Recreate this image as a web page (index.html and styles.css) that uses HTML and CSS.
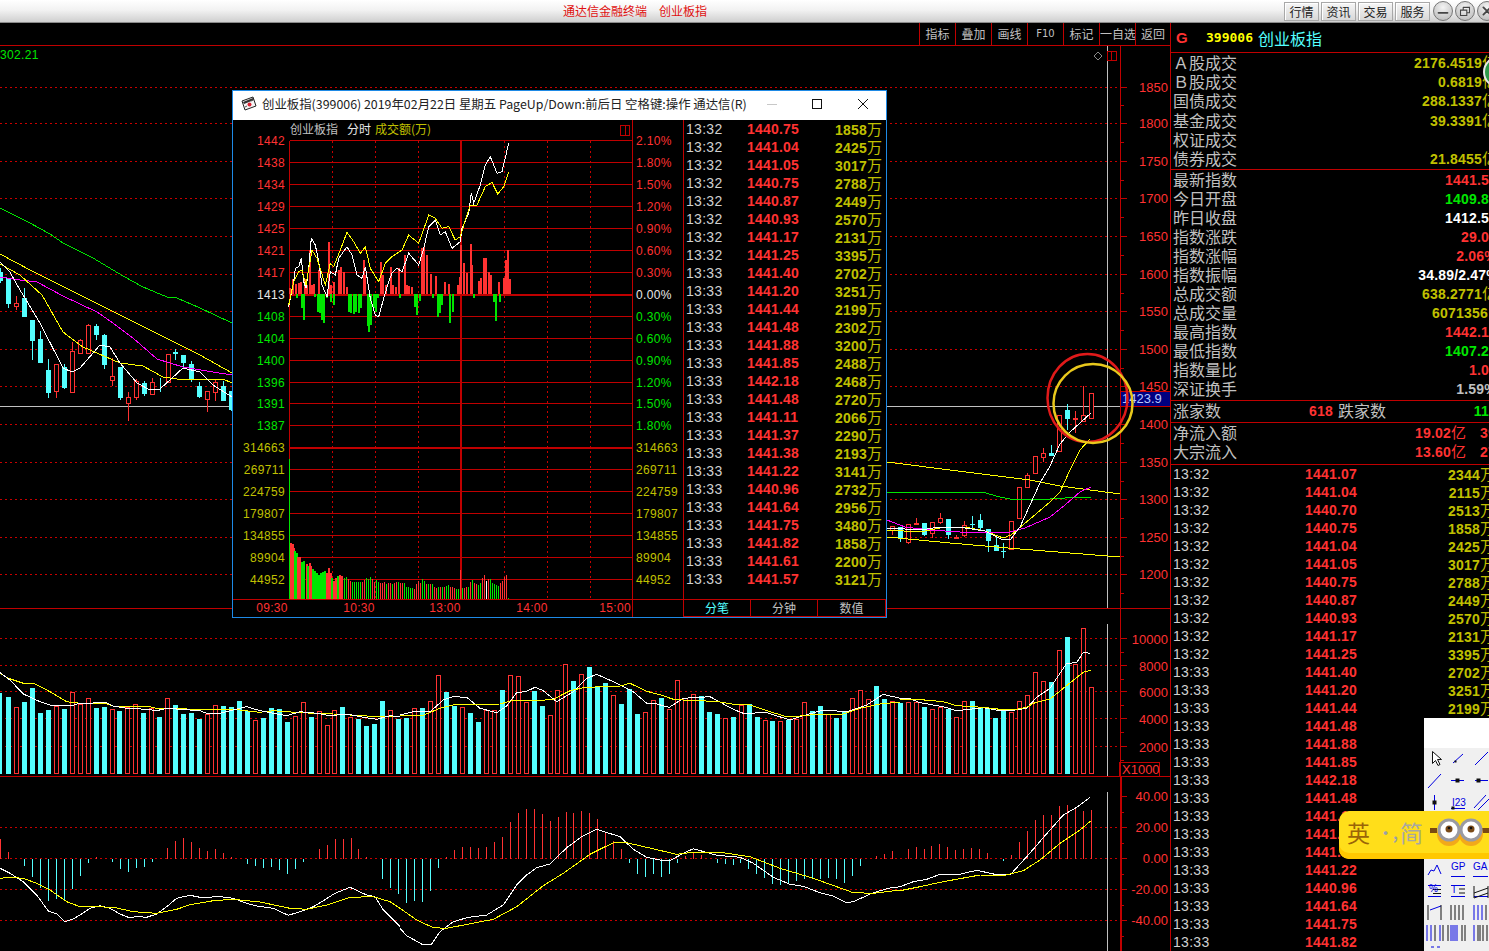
FILE: index.html
```html
<!DOCTYPE html>
<html lang="zh-CN">
<head>
<meta charset="utf-8">
<title>通达信金融终端 创业板指</title>
<link rel="stylesheet" href="styles.css">
</head>
<body>
<div class="app">
  <header class="titlebar">
    <div class="app-title"><span>通达信金融终端</span><span>创业板指</span></div>
    <nav class="menu">
      <button class="menu-btn">行情</button>
      <button class="menu-btn">资讯</button>
      <button class="menu-btn">交易</button>
      <button class="menu-btn">服务</button>
      <span class="round-btn"><svg viewBox="0 0 20 20"><path d="M5 12h10" class="glyph"/></svg></span>
      <span class="round-btn"><svg viewBox="0 0 20 20"><path d="M8 6h7v6h-3M5 9h7v6H5zM8 6v3" class="glyph thin"/></svg></span>
      <span class="round-btn"><svg viewBox="0 0 20 20"><path d="M6 6l8 8M14 6l-8 8" class="glyph"/></svg></span>
    </nav>
  </header>

  <div class="workspace">
    <section class="chart-col">
      <div class="chart-tools">
        <span class="tool">指标</span><span class="tool">叠加</span><span class="tool">画线</span><span class="tool tool-f10">F10</span><span class="tool">标记</span><span class="tool">一自选</span><span class="tool">返回</span>
      </div>
      <svg id="pricePane" class="pane pane-price" viewBox="0 46 1170 562"></svg>
      <svg id="volPane" class="pane pane-vol" viewBox="0 609 1170 167"></svg>
      <svg id="macdPane" class="pane pane-macd" viewBox="0 777 1170 174"></svg>
    </section>

    <aside class="quote">
      <div class="quote-head"><b class="q-g">G</b><b class="q-code">399006</b><span class="q-name">创业板指</span></div>
      <div class="q-sec q-sec-1">
        <div class="q-row"><span>Ａ股成交</span><b class="yl">2176.4519<i>亿</i></b></div>
        <div class="q-row"><span>Ｂ股成交</span><b class="yl">0.6819<i>亿</i></b></div>
        <div class="q-row"><span>国债成交</span><b class="yl">288.1337<i>亿</i></b></div>
        <div class="q-row"><span>基金成交</span><b class="yl">39.3391<i>亿</i></b></div>
        <div class="q-row"><span>权证成交</span></div>
        <div class="q-row"><span>债券成交</span><b class="yl">21.8455<i>亿</i></b></div>
      </div>
      <div class="q-sec q-sec-2">
        <div class="q-row"><span>最新指数</span><b class="rd">1441.57</b></div>
        <div class="q-row"><span>今日开盘</span><b class="gn">1409.87</b></div>
        <div class="q-row"><span>昨日收盘</span><b class="wt">1412.53</b></div>
        <div class="q-row"><span>指数涨跌</span><b class="rd">29.04</b></div>
        <div class="q-row"><span>指数涨幅</span><b class="rd">2.06%</b></div>
        <div class="q-row q-wide"><span>指数振幅</span><b class="wt">34.89/2.47%</b></div>
        <div class="q-row"><span>总成交额</span><b class="yl">638.2771<i>亿</i></b></div>
        <div class="q-row q-inset"><span>总成交量</span><b class="yl">6071356</b></div>
        <div class="q-row"><span>最高指数</span><b class="rd">1442.18</b></div>
        <div class="q-row"><span>最低指数</span><b class="gn">1407.29</b></div>
        <div class="q-row"><span>指数量比</span><b class="rd">1.05</b></div>
        <div class="q-row"><span>深证换手</span><b class="gy">1.59%</b></div>
      </div>
      <div class="q-sec q-sec-3">
        <div class="q-row q-split"><span class="q-l1">涨家数</span><b class="rd q-n1">618</b><span>跌家数</span><b class="gn q-end">113</b></div>
      </div>
      <div class="q-sec q-sec-4">
        <div class="q-row"><span>净流入额</span><b class="rd q-push">19.02<i>亿</i></b><b class="rd q-second">39.1%</b></div>
        <div class="q-row"><span>大宗流入</span><b class="rd q-push">13.60<i>亿</i></b><b class="rd q-second">27.6%</b></div>
      </div>
      <div id="quoteTicks" class="q-ticks"></div>
    </aside>
  </div>

  <section class="popup">
    <div class="popup-title">
      <svg class="popup-icon" viewBox="0 0 16 16"><path d="M1 5l11-4 3 9-11 4z" fill="#f4f4f4" stroke="#222"/><path d="M2 6l10-4 1 2-10 4z" fill="#333"/><circle cx="8.5" cy="8.5" r="2" fill="#d23" /><path d="M4 11l2-1M10 5l2-1" stroke="#555"/></svg>
      <span class="popup-caption">创业板指(399006) 2019年02月22日 星期五 PageUp/Down:前后日 空格键:操作 通达信(R)</span>
      <span class="win-ctl win-min"></span>
      <span class="win-ctl win-max"></span>
      <svg class="win-close" viewBox="0 0 10 10"><path d="M0 0l10 10M10 0L0 10" stroke="#111" fill="none"/></svg>
    </div>
    <div class="popup-body">
      <svg id="miniChart" class="mini-chart" viewBox="233 120 450 497"></svg>
      <div class="mini-side">
        <div id="miniTicks" class="mini-ticks"></div>
        <div class="mini-tabs"><span class="tab tab-on">分笔</span><span class="tab">分钟</span><span class="tab">数值</span></div>
      </div>
    </div>
  </section>

  <span class="bubble"></span>

  <svg class="toolbox" viewBox="1424 718 65 233">
    <rect x="1424" y="718" width="65" height="30" fill="#fff"/>
    <rect x="1424" y="748" width="65" height="203" fill="#f0f0f0"/>
    <g fill="none" stroke="#0000e0">
      <path d="M1432.5 751.5v12l3-3 2.500 5 2-1-2.500-5h4z" fill="#fff" stroke="#111"/>
      <path d="M1453 763l10-9M1475 765l13-13M1428 788l13-14M1451 780.500h13M1475 780.500h13M1434.500 795v15M1451 808.500h14M1474 808l12-13M1478 810l11-11"/>
      <path d="M1428 875l3-5 3 1 3-6 4 9"/>
      <path d="M1451 876.500h14M1473 876.500h15M1428 885.500h13M1428 896.500h13M1451 885.500h14M1451 896.500h14M1474 896.500h14M1430 910l11-4M1474 905v15M1478 905v15M1482 905v15"/>
    </g>
    <g stroke="#111" fill="none">
      <path d="M1433 889.500h8M1433 893.500h8M1459 889h6M1459 893h6M1474 886v12M1474 893l14-5M1474 898l14-5M1488 886v12M1428 905v15M1441 905v15M1451 905v15M1455 905v15M1459 905v15M1463 905v15M1486 905v15"/>
    </g>
    <g stroke="#111" fill="#111"><rect x="1455" y="761" width="1" height="1"/><rect x="1456" y="779" width="3" height="3"/><rect x="1477" y="779" width="3" height="3"/><rect x="1433" y="801" width="3" height="3"/><rect x="1452" y="807" width="2" height="2"/></g>
    <g class="tool-glyphs">
      <text x="1452" y="806">I23</text><text x="1451" y="870">GP</text><text x="1473" y="870">GA</text><text x="1429" y="892">%</text><text x="1451" y="893">T</text>
    </g>
    <g stroke-width="1" fill="none">
      <path d="M1427 925v16M1431 925v16M1440 925v16" stroke="#0000e0"/><path d="M1435 925v16M1443 925v16M1448 925v16" stroke="#111"/>
      <path d="M1451 925v16M1453 925v16M1455 925v16M1457 925v16" stroke="#0000e0"/><path d="M1462 925v16M1465 925v16" stroke="#111"/>
      <path d="M1474 925v16" stroke="#0000e0"/><path d="M1478 925v16M1480 925v16M1483 925v16M1487 925v16" stroke="#111"/>
      <path d="M1431 947h3M1437 947h3" stroke="#0000e0"/>
    </g>
  </svg>

  <div class="ime">
    <span class="ime-en">英</span><span class="ime-dot">·,</span><span class="ime-cn">简</span>
    <svg class="goggles" viewBox="0 0 59 30">
      <rect x="0" y="11" width="7" height="5" fill="#7a4a10"/><rect x="52" y="11" width="7" height="5" fill="#7a4a10"/>
      <ellipse cx="19" cy="17" rx="12" ry="12" fill="#f2a91a"/><ellipse cx="41" cy="17" rx="12" ry="12" fill="#f2a91a"/>
      <circle cx="19" cy="13" r="10" fill="#fff" stroke="#9a9aa2" stroke-width="3"/><circle cx="41" cy="13" r="10" fill="#fff" stroke="#9a9aa2" stroke-width="3"/>
      <circle cx="19" cy="12" r="3.500" fill="#7a4a18"/><circle cx="41" cy="12" r="3.500" fill="#7a4a18"/>
      <circle cx="19" cy="11" r="1.300" fill="#111"/><circle cx="41" cy="11" r="1.300" fill="#111"/>
    </svg>
  </div>
</div>
<script src="script.js"></script>
</body>
</html>
```
FILE: styles.css
```css
* { box-sizing: border-box; }
html, body { margin: 0; padding: 0; background: #000; overflow: hidden; }
.app { position: relative; width: 1489px; height: 951px; overflow: hidden; background: #000; font-family: "Noto Sans CJK SC", "Liberation Sans", sans-serif; }

/* title bar */
.titlebar { display: flex; align-items: center; height: 23px; background: linear-gradient(#ffffff, #f2f2f2 45%, #cfcfcf); border-bottom: 1px solid #8a8a8a; }
.app-title { flex: 1; display: flex; gap: 12px; padding-left: 563px; color: #e01010; font-size: 12px; line-height: 20px; }
.menu { display: flex; align-items: center; margin-right: -8px; gap: 2px; flex: none; }
.menu-btn { width: 35px; height: 19px; padding: 0; border: 1px solid #a8a8a8; background: linear-gradient(#f6f6f6, #d8d8d8); box-shadow: inset 1px 1px 0 #fff; color: #222; font: 12px/17px "Noto Sans CJK SC", sans-serif; }
.round-btn { width: 20px; height: 20px; border-radius: 50%; border: 1px solid #777; background: radial-gradient(circle at 50% 30%, #f4f4f4, #b4b4b4); display: block; }
.menu-btn + .round-btn { margin-left: 1px; }
.round-btn svg { display: block; width: 18px; height: 18px; }
.glyph { fill: none; stroke: #444; stroke-width: 2; stroke-linecap: round; }
.glyph.thin { stroke-width: 1.2; }

/* workspace */
.workspace { display: flex; height: 928px; }
.chart-col { flex: 0 0 1170px; display: flex; flex-direction: column; }
.chart-tools { display: flex; justify-content: flex-end; height: 23px; border-bottom: 1px solid #c00000; }
.tool { width: 36px; border-left: 1px solid #c00000; color: #c0c0c0; font-size: 12px; line-height: 21px; text-align: center; white-space: nowrap; }
.tool:last-child { width: 35px; }
.tool-f10 { font-family: "DejaVu Sans", sans-serif; font-size: 10px; }
.pane { display: block; width: 1170px; flex: none; background: #000; }
.pane-price { height: 563px; border-bottom: 1px solid #c00000; }
.pane-vol { height: 168px; border-bottom: 1px solid #c00000; }
.pane-macd { height: 174px; }

/* SVG chart primitives */
svg line, svg polyline, svg rect.px { shape-rendering: crispEdges; }
.grid { stroke: #c80000; stroke-width: 1; stroke-dasharray: 2 3; }
.axis { stroke: #c00000; stroke-width: 1; }
.axis2 { stroke: #c00000; stroke-width: 2; }
.tick { stroke: #c00000; stroke-width: 1; }
.cross { stroke: #c0c0c0; stroke-width: 1; }
.up { stroke: #ff3232; fill: #000; stroke-width: 1; }
.up-wick { stroke: #ff3232; stroke-width: 1; }
.down { fill: #54ffff; stroke: none; }
.down-wick { stroke: #54ffff; stroke-width: 1; }
.ma { fill: none; stroke-width: 1; }
.ma-w { stroke: #ffffff; }
.ma-y { stroke: #ffff00; }
.ma-m { stroke: #ff00ff; }
.ma-g { stroke: #00e600; }
.lbl { font: 13px "Liberation Sans", sans-serif; fill: #ff3232; }
.lbl-s { font: 12px "Liberation Sans", sans-serif; letter-spacing: .33px; }
.fill-r { fill: #ff3232; }
.fill-g { fill: #00e600; }
.fill-w { fill: #e8e8e8; }
.fill-y { fill: #c0c000; }
.cjk { font: 12px "Noto Sans CJK SC", sans-serif; }
.fill-gy { fill: #c0c0c0; }
.halo-red { fill: none; stroke: #e01a1a; stroke-width: 2.5; }
.halo-yel { fill: none; stroke: #e8c81c; stroke-width: 2.5; }
.price-tag { fill: #000080; stroke: #c00000; }
.tag-text { font: 13px "Liberation Sans", sans-serif; fill: #b8c8ff; }
.lbox { fill: none; stroke: #c00000; }

/* quote panel */
.quote { flex: 0 0 328px; border-left: 1px solid #c00000; color: #c0c0c0; font-size: 16px; }
.quote-head { display: flex; align-items: center; height: 30px; border-bottom: 1px solid #c00000; }
.q-g { width: 35px; padding-left: 5px; color: #ff3232; font: bold 15px "Liberation Sans", sans-serif; }
.q-code { width: 52px; color: #ffff00; font: bold 13px "DejaVu Sans Mono", monospace; }
.q-name { color: #54ffff; font-size: 16px; line-height: 20px; }
.q-sec { border-bottom: 1px solid #c00000; }
.q-sec-1 { height: 117px; }
.q-sec-2 { height: 231px; }
.q-sec-3 { height: 22px; }
.q-sec-4 { height: 42px; }
.q-sec-1 .q-row { height: 19.2px; }
.q-row { display: flex; justify-content: space-between; align-items: center; height: 19px; padding: 0 1px 0 2px; line-height: 19px; white-space: nowrap; }
.q-row b { font: bold 14px/18px "Liberation Sans", sans-serif; letter-spacing: .2px; }
.q-row i { font: 400 15px/18px "Noto Sans CJK SC", sans-serif; font-style: normal; letter-spacing: 0; }
.q-wide { margin-right: -2px; }
.q-inset { padding-right: 10px; }
.yl { color: #c0c000; }
.rd { color: #ff3232; }
.gn { color: #00e600; }
.wt { color: #ffffff; }
.gy { color: #c0c0c0; }
.q-split { justify-content: flex-start; }
.q-l1 { width: 136px; }
.q-n1 { width: 29px; }
.q-end { margin-left: auto; }
.q-push { margin-left: auto; }
.q-second { width: 17px; margin-left: 14px; }
.q-ticks { padding-left: 2px; padding-right: 3px; }
.tick-row { display: grid; grid-template-columns: 132px 1fr auto; height: 18px; line-height: 18px; white-space: nowrap; }
.t-time { color: #d0d0d0; font: 400 14px/18px "Liberation Sans", sans-serif; letter-spacing: .3px; }
.t-price { color: #ff3232; font: bold 14px/18px "Liberation Sans", sans-serif; letter-spacing: .2px; }
.t-vol { color: #c0c000; font: bold 14px/18px "Liberation Sans", sans-serif; letter-spacing: .2px; }
.t-vol i { font: 400 15px/18px "Noto Sans CJK SC", sans-serif; font-style: normal; letter-spacing: 0; }

/* floating quote window */
.popup { position: absolute; left: 232px; top: 90px; width: 655px; height: 528px; display: flex; flex-direction: column; background: #000; border: 1px solid #1e8ae6; }
.popup-title { display: flex; align-items: center; height: 29px; padding-bottom: 3px; flex: none; background: #fff; color: #222; font-size: 12px; }
.popup-icon { width: 16px; height: 16px; margin-left: 8px; flex: none; }
.popup-caption { margin-left: 5px; white-space: nowrap; font-size: 12.4px; }
.win-ctl { display: block; flex: none; }
.win-min { width: 10px; height: 1px; margin-left: 20px; background: #c8c8c8; }
.win-max { width: 10px; height: 10px; margin-left: 35px; border: 1px solid #111; }
.win-close { width: 10px; height: 10px; margin-left: 36px; flex: none; }
.popup-body { display: flex; flex: 1; min-height: 0; }
.mini-chart { display: block; width: 450px; height: 497px; flex: none; }
.mini-side { flex: 1; display: flex; flex-direction: column; border-left: 1px solid #c00000; }
.mini-ticks { flex: 1; padding: 0 4px 0 2px; }
.mini-ticks .tick-row { grid-template-columns: 61px 1fr auto; }
.mini-tabs { display: flex; height: 18px; border: 1px solid #c00000; border-left: 0; }
.tab { flex: 0 0 66px; border-left: 1px solid #c00000; color: #c0c0c0; font-size: 12px; line-height: 16px; text-align: center; }
.tab + .tab { flex-basis: 67px; }
.tab:last-child { flex: 1; }
.tab:first-child { border-left: 0; }
.tab-on { color: #54ffff; }

/* overlays */
.bubble { position: absolute; left: 1483px; top: 56px; width: 32px; height: 32px; border-radius: 50%; background: #2d9a4a; border: 2px solid #e8e8e8; }
.toolbox { position: absolute; left: 1424px; top: 718px; width: 65px; height: 233px; display: block; }
.tool-glyphs text { font: 10px "Liberation Sans", sans-serif; fill: #0000e0; }
.ime { position: absolute; left: 1339px; top: 811px; width: 170px; height: 48px; display: flex; align-items: center; padding: 0 0 6px 8px; border-radius: 10px 0 0 10px; background: #ffde1a; box-shadow: inset 0 -6px 0 #ffc800; }
.ime-en { color: #9a6408; font-size: 23px; line-height: 30px; }
.ime-dot { margin-left: 8px; width: 22px; color: #9aa0a8; font-size: 15px; font-weight: 700; }
.ime-cn { color: #a8a8a0; font-size: 23px; line-height: 30px; }
.goggles { width: 59px; height: 30px; margin-left: 7px; flex: none; }
```
FILE: script.js
```js
(function () {
  var Z = 1 / 3;
  function pts(str, ox, oy) {
    return str.trim().split(/\s+/).map(function (p) {
      var a = p.split(',');
      return (ox + a[0] * Z).toFixed(1) + ',' + (oy + a[1] * Z).toFixed(1);
    }).join(' ');
  }
  function poly(cls, points) { return '<polyline class="ma ' + cls + '" points="' + points + '"/>'; }
  function ln(cls, x1, y1, x2, y2) { return '<line class="' + cls + '" x1="' + x1 + '" y1="' + y1 + '" x2="' + x2 + '" y2="' + y2 + '"/>'; }
  function txt(cls, x, y, s, anchor) { return '<text class="' + cls + '" x="' + x + '" y="' + y + '"' + (anchor ? ' text-anchor="' + anchor + '"' : '') + '>' + s + '</text>'; }

  /* ---------- price pane ---------- */
  var AX = 1120.5, PANE_R = 1168;
  var levels = [[1850,87],[1800,123.5],[1750,161.5],[1700,198.5],[1650,236.5],[1600,274.5],[1550,311.5],[1500,349.5],[1450,386.5],[1400,424.5],[1350,462.5],[1300,499.5],[1250,537.5],[1200,574.5]];
  var candles = [
    [0,'c',268,272,281,283],[8,'c',278,278,304,308],[16,'r',296,303,306,310],[24,'c',288,298,317,317],[32,'c',320,320,341,360],[40,'c',331,339,363,363],
    [48,'c',359,370,393,398],[56,'r',364,364,391,398],[64,'c',364,367,388,389],[72,'r',342,351,392,392],[80,'r',339,340,353,353],[88,'r',324,325,353,353],
    [96,'c',324,326,335,340],[104,'c',334,335,365,369],[112,'r',358,376,380,386],[120,'c',367,367,398,400],[128,'r',392,397,403,421],[136,'r',379,381,397,400],
    [144,'c',381,383,394,396],[152,'r',378,382,394,394],[160,'c',378,388,389,392],[168,'r',354,354,382,383],[175,'c',349,352,354,360],[183,'c',355,355,363,367],
    [191,'c',361,364,379,382],[199,'c',382,386,397,398],[207,'r',391,391,399,412],[215,'r',379,382,392,401],[223,'c',381,386,401,401],[231,'c',391,391,410,411],
    [892,'r',526,526,530,535],[900,'c',527,527,539,542],[908,'r',524,524,542,544],[916,'r',518,523,524,525],[924,'c',523,523,535,536],[932,'r',522,522,533,538],
    [940,'r',513,518,522,524],[948,'c',519,519,535,539],[956,'r',535,537,538,539],[964,'r',521,525,535,537],[972,'c',516,524,525,528],[980,'c',514,520,528,530],
    [988,'c',529,529,541,552],[996,'c',537,545,551,551],[1003,'c',543,551,552,558],[1011,'r',521,521,549,549],[1019,'r',487,487,518,518],[1027,'r',473,475,487,487],
    [1035,'r',456,456,473,473],[1043,'r',448,453,457,462],[1051,'c',445,453,456,456],[1059,'r',415,415,451,451],[1067,'c',404,410,419,430],[1075,'r',411,418,419,433],
    [1083,'r',386,415,421,421],[1091,'r',393,393,418,418]
  ];
  var p = '';
  levels.forEach(function (l) {
    p += ln('grid', 0, l[1], AX, l[1]);
    p += ln('tick', AX, l[1], AX + 6, l[1]);
    p += ln('tick', AX, l[1] + 18.5, AX + 3, l[1] + 18.5);
    p += txt('lbl', PANE_R, l[1] + 4.5, l[0], 'end');
  });
  p += ln('axis', AX, 46, AX, 608);
  p += ln('cross', 0, 406.5, AX, 406.5);
  p += ln('cross', 1107.5, 46, 1107.5, 608);
  candles.forEach(function (c) {
    var x = c[0], mid = x + .5, r = c[1] === 'r';
    if (c[2] < c[3]) p += ln(r ? 'up-wick' : 'down-wick', mid, c[2], mid, c[3]);
    if (c[5] > c[4]) p += ln(r ? 'up-wick' : 'down-wick', mid, c[4], mid, c[5]);
    if (r) p += '<rect class="up px" x="' + (x - 2 + .5) + '" y="' + (c[3] + .5) + '" width="4" height="' + Math.max(1, c[4] - c[3]) + '"/>';
    else p += '<rect class="down px" x="' + (x === 160 ? x : x - 2) + '" y="' + c[3] + '" width="' + (x === 160 ? 1 : 5) + '" height="' + Math.max(1, c[4] - c[3]) + '"/>';
  });
  p += poly('ma-g', '0,208 10,213 30,223 50,234 63,243 93,258 123,276 143,287 167,297 177,298 200,308 232,323');
  p += poly('ma-y', '0,254 30,270 90,300 150,330 200,355 232,373');
  p += poly('ma-m', '0,277 20,280 37,282 63,296 97,312 113,323 133,338 157,359 183,367 213,372 232,375');
  p += poly('ma-y', '0,264 20,275 42,295 63,332 83,347 120,363 143,366 163,377 177,379 200,379 223,379 232,383');
  p += poly('ma-w', '0,262 10,272 20,290 40,323 63,368 72,372 80,368 100,345 110,347 120,363 137,383 150,390 160,389 183,368 200,372 213,385 232,397');
  p += poly('ma-y', '887,462 950,470 1030,480 1060,486 1120,494');
  p += poly('ma-y', '887,537 950,543 1020,549 1120,557');
  p += poly('ma-g', '887,492 920,492 982,492 1000,497 1010,499 1050,499 1080,497 1091,497');
  p += poly('ma-y', '887,530 920,532 940,528 965,527 985,531 1003,538 1011,535 1030,519 1050,502 1060,492 1070,470 1080,450 1090,439');
  p += poly('ma-m', '887,520 905,527 930,530 960,532 990,533 1010,532 1025,528 1050,517 1065,505 1080,492 1091,487');
  p += poly('ma-w', '887,528 905,529 920,530 940,527 965,528 985,531 1003,540 1011,539 1020,527 1030,505 1040,483 1050,466 1060,444 1070,432 1080,423 1091,413');
  p += '<rect class="price-tag px" x="' + AX + '" y="391.5" width="50" height="15"/>';
  p += txt('tag-text', 1122, 403, '1423.9');
  p += '<ellipse class="halo-red" cx="1087.5" cy="398" rx="40" ry="44"/><circle class="halo-yel" cx="1093" cy="403.5" r="39.5"/>';
  p += txt('lbl lbl-s fill-g', 0, 59, '302.21');
  p += '<path d="M1098 52l4 4-4 4-4-4z" fill="none" stroke="#888"/>';
  p += '<rect class="lbox px" x="1107.5" y="51.5" width="9" height="9"/>' + ln('axis', 1111.5, 52, 1111.5, 60);
  document.getElementById('pricePane').innerHTML = p;

  /* ---------- volume pane ---------- */
  var volData = ('c231 r262 c246 c204 c279 c270 r259 c267 r217 r252 r235 c264 c261 r268 c273 r262 r253 c279 r264 c291 r235 c255 c282 c279 c297 r282 r256 c258 c261 c243 c273 r300 c294 c264 c267 c306 r288 r247 c291 r274 r316 r271 c261 r292 c297 c318 c312 c243 r271 c297 ' +
    'c294 r265 c264 r244 r166 c216 c258 r262 c279 c306 r270 r270 c210 r166 r169 r246 c213 c258 r286 r211 r133 c183 r163 c141 c198 c189 r226 c252 c207 c282 r277 r240 c234 r268 r181 r234 r222 c228 c276 c282 r295 c291 r254 c253 c291 r301 c303 r304 c301 r298 r247 c273 c258 r283 c294 c274 r235 r211 r238 c198 c237 r244 c248 ' +
    'r245 r247 c261 r268 r262 c267 r292 r243 c243 c261 c263 c294 c273 r276 r243 r226 r157 r184 c186 r91 c51 r133 r25 r202').split(' ');
  var v = '';
  [[58,10000],[139,8000],[217,6000],[298,4000],[380,2000]].forEach(function (g) {
    var y = 620 + Math.round(g[0] / 3) - .5;
    v += ln('grid', 0, y, AX, y);
    v += ln('tick', AX, y, AX + 6, y);
    v += ln('tick', AX, y + 13.5, AX + 3, y + 13.5);
    v += txt('lbl', PANE_R, y + 5, g[1], 'end');
  });
  v += ln('axis', AX, 609, AX, 776);
  v += ln('cross', 1107.5, 624, 1107.5, 776);
  var step = (1087 - 4) / (volData.length - 1);
  v += '<rect class="down px" x="-3" y="693" width="5" height="81"/>';
  volData.forEach(function (d, i) {
    var x = Math.round(6 + i * step), top = Math.round(620 + d.slice(1) * Z);
    if (d[0] === 'c') v += '<rect class="down px" x="' + x + '" y="' + top + '" width="5" height="' + (774 - top) + '"/>';
    else v += '<rect class="up px" x="' + (x + .5) + '" y="' + (top + .5) + '" width="4" height="' + (773 - top) + '"/>';
  });
  v += poly('ma-y', pts('0,160 25,175 70,190 100,190 150,215 200,245 240,250 320,252 340,258 440,258 470,265 560,267 700,268 780,277 820,272 900,278 1000,282 1100,288 1200,290', 0, 620));
  v += poly('ma-w', pts('0,158 30,180 70,222 120,245 150,255 210,258 240,250 320,248 340,258 380,265 440,268 470,272 500,265 600,272 620,280 660,280 700,270 740,260 780,272 830,282 860,287 900,275 950,280 990,287 1040,282 1080,290 1130,298 1170,287 1200,290', 0, 620));
  v += poly('ma-w', pts('0,285 40,275 90,275 130,240 160,230 200,232 240,265 290,278 320,258 350,218 380,214 405,202 430,212 470,245 520,215 560,175 590,163 640,185 700,215 740,250 770,252 808,262 850,235 930,230 1000,268 1030,280 1100,278 1170,300 1200,290 1270,270 1340,275 1400,255 1450,223 1500,235', 400, 620));
  v += poly('ma-y', pts('0,288 70,286 120,265 160,255 250,253 300,252 340,241 400,243 460,238 510,212 550,203 600,200 660,198 690,190 740,214 780,224 820,238 860,241 890,241 960,246 1000,253 1050,255 1100,272 1160,290 1200,288 1240,284 1320,285 1380,265 1440,252 1500,246', 400, 620));
  v += poly('ma-w', pts('0,234 30,236 60,248 130,260 170,272 250,263 300,272 330,272 380,265 410,232 450,205 500,130 530,128 550,97 570,100', 900, 620));
  v += poly('ma-y', pts('0,240 50,238 130,245 170,257 250,262 300,268 340,270 380,262 400,250 450,237 490,205 550,157 572,151', 900, 620));
  v += '<rect class="lbox px" x="1119.5" y="762.5" width="40" height="14"/>' + txt('lbl', 1122, 773.5, 'X1000');
  document.getElementById('volPane').innerHTML = v;

  /* ---------- MACD pane ---------- */
  var ZERO = 858.5, m = '';
  [827.5, 889.5, 920.5, ZERO].forEach(function (y) { m += ln('grid', 0, y, AX, y); });
  [[796.5,'40.00'],[827.5,'20.00'],[858.5,'0.00'],[889.5,'-20.00'],[920.5,'-40.00']].forEach(function (g) {
    m += ln('tick', AX, g[0], AX + 6, g[0]);
    m += ln('tick', AX, g[0] + 15.5, AX + 3, g[0] + 15.5);
    m += txt('lbl', PANE_R, g[0] + 4.5, g[1], 'end');
  });
  m += ln('axis2', AX, 777, AX, 951);
  m += ln('cross', 1107.5, 792, 1107.5, 951);
  function bars(str, ox) {
    str.split(' ').forEach(function (b) {
      var a = b.split(','), x = Math.round(ox + a[0] * Z) + .5, y = 620 + a[1] * Z, r = a[2] === 'r';
      m += ln(r ? 'up-wick' : 'down-wick', x, ZERO, x, y.toFixed(1));
    });
  }
  bars('1,657,r 25,697,r 73,737,c 97,770,c 121,803,c 145,842,c 169,837,c 193,840,c 217,807,c 241,767,c 265,729,c 289,712,r 337,725,c 361,746,c 385,755,c 409,743,c 433,741,c 457,725,c 478,716,c 502,684,r 526,663,r 550,654,r 574,666,r 598,684,r 622,693,r 646,687,r 670,699,r 694,712,r 742,731,c 766,738,c 790,743,c 814,740,c 838,749,c 862,761,c 886,747,c 910,725,c 958,687,r 982,675,r 1006,657,r 1030,657,r 1054,654,r 1075,687,r 1099,712,r 1147,776,c 1171,803,c 1195,821,c', 0);
  bars('19,848,c 43,842,c 67,845,c 91,812,c 115,743,c 139,712,r 163,690,r 187,681,r 211,681,r 235,684,r 259,681,r 283,666,r 307,651,r 331,606,r 355,579,r 379,567,r 403,567,r 427,582,r 449,603,r 473,591,r 497,576,r 520,579,r 544,573,r 568,579,r 592,597,r 616,639,r 640,663,r 664,687,r 688,728,c 712,761,c 736,770,c 760,761,c 784,770,c 808,761,c 832,728,c 856,708,r 880,697,r 904,705,r 952,728,c 976,731,c 1000,734,c 1021,728,c 1045,746,c 1069,761,c 1093,773,c 1117,791,c 1141,794,c 1165,793,c 1189,782,c 1213,776,c 1237,775,c 1261,778,c 1285,773,c 1309,778,c 1333,788,c 1357,767,c 1381,737,c 1429,708,r 1453,702,r 1477,693,r', 400);
  bars('24,687,r 48,681,r 72,687,r 94,678,r 118,672,r 142,681,r 166,690,r 190,687,r 214,684,r 238,687,r 262,699,r 310,722,c 334,705,r 358,666,r 382,633,r 406,600,r 430,585,r 454,585,r 478,558,r 502,555,r 526,564,r 550,573,r 574,570,r', 900);
  m += poly('ma-w', pts('0,745 30,760 70,785 110,825 145,873 170,882 195,905 220,897 240,885 270,865 300,857 330,865 360,882 385,892 420,890 440,892 470,882 500,860 530,835 570,826 600,832 630,832 650,829 700,835 740,850 770,858 820,865 865,886 900,875 940,860 970,842 1005,820 1050,802 1100,825 1125,830 1150,870 1200,920', 0, 620));
  m += poly('ma-y', pts('0,775 30,772 70,775 110,790 150,810 200,845 240,860 300,860 350,864 400,875 470,880 530,868 570,854 640,842 700,838 780,846 870,865 920,868 980,855 1050,832 1120,830 1170,845 1200,865', 0, 620));
  m += poly('ma-w', pts('0,925 20,947 70,975 95,972 120,935 160,905 205,892 260,885 310,855 350,795 380,765 410,743 450,732 500,683 545,650 590,628 660,650 700,688 740,712 780,720 810,722 850,700 880,686 950,706 1020,712 1060,730 1120,772 1170,793 1210,799 1260,818 1300,828 1340,848 1360,845 1420,818 1470,804 1500,800', 400, 620));
  m += poly('ma-y', pts('0,865 50,900 100,923 140,925 280,898 350,860 430,797 490,760 570,703 640,668 680,668 830,703 880,697 960,697 1050,710 1140,745 1240,775 1360,818 1420,820 1500,810', 400, 620));
  m += poly('ma-w', pts('0,800 40,785 80,778 120,763 170,765 230,751 290,764 330,765 380,710 450,630 490,585 530,562 570,532', 900, 620));
  m += poly('ma-y', pts('0,812 60,800 120,787 240,765 310,767 370,752 420,720 480,670 540,630 572,603', 900, 620));
  document.getElementById('macdPane').innerHTML = m;

  /* ---------- mini chart in the floating window ---------- */
  var c = '', L = 289.5, R = 632.5, ROW = 21.93;
  var left = [1442,1438,1434,1429,1425,1421,1417,1413,1408,1404,1400,1396,1391,1387,314663,269711,224759,179807,134855,89904,44952];
  var right = ['2.10%','1.80%','1.50%','1.20%','0.90%','0.60%','0.30%','0.00%','0.30%','0.60%','0.90%','1.20%','1.50%','1.80%','314663','269711','224759','179807','134855','89904','44952'];
  left.forEach(function (n, i) {
    var y = Math.round(140.3 + i * ROW) + .5;
    var heavy = i === 7 || i === 14;
    c += ln(heavy ? 'axis2' : 'axis', L, y, R, y);
    var lc = i < 7 ? 'fill-r' : i === 7 ? 'fill-w' : i < 14 ? 'fill-g' : 'fill-y';
    c += txt('lbl lbl-s ' + lc, 285, y + 4.5, n, 'end');
    c += txt('lbl lbl-s ' + lc, 636, y + 4.5, right[i]);
  });
  [332, 375.5, 418.5, 504.5, 547.5, 590.5].forEach(function (x) { c += ln('grid', x, 141, x, 599); });
  c += ln('axis2', 460.5, 141, 460.5, 599);
  c += ln('axis', L, 141, L, 599);
  c += ln('axis', R, 120, R, 617);
  c += ln('axis', 233, 599.5, 683, 599.5);
  c += txt('cjk fill-gy', 290, 134, '创业板指') + txt('cjk fill-w', 347, 134, '分时') + txt('cjk fill-y', 375, 134, '成交额(万)');
  c += '<rect class="lbox px" x="620.5" y="125.5" width="9" height="10"/>' + ln('axis', 625.5, 126, 625.5, 135);
  [['09:30',272],['10:30',359],['13:00',445],['14:00',532]].forEach(function (t) { c += txt('lbl lbl-s fill-r', t[1], 611.5, t[0], 'middle'); });
  c += txt('lbl lbl-s fill-r', 631, 611.5, '15:00', 'end');
  function mini(str) { return pts(str, 232, 85); }
  var mz = 85 + 627 * Z;
  function miniBars(str, cls) {
    str.split(' ').forEach(function (b) {
      var a = b.split(':');
      var x = (232 + a[0] * Z).toFixed(1);
      c += '<line x1="' + x + '" x2="' + x + '" y1="' + mz.toFixed(1) + '" y2="' + (85 + a[1] * Z).toFixed(1) + '" stroke="' + cls + '" stroke-width="2"/>';
    });
  }
  miniBars('175:610 182:582 192:598 202:595 208:592 218:582 226:600 234:495 240:600 245:598 262:555 290:470 298:600 305:590 320:555 327:545 335:560 345:605 395:525 400:570 446:530 452:570 461:600 476:545 483:600 492:605 500:550 518:510 524:600 530:602 540:605 570:490 577:485 584:510 596:568 611:572 638:590 652:597 677:600 684:575 688:480 695:535 704:565 716:478 721:540 742:588 748:580 756:520 762:518 770:560 776:570 802:592 815:578 822:525 827:495 834:582', '#ff3232');
  miniBars('195:638 210:670 217:705 250:635 258:680 265:685 270:705 277:715 285:640 298:650 306:660 350:680 357:685 365:688 372:680 380:685 388:668 407:722 412:742 418:720 425:668 431:680 437:640 505:640 548:665 556:690 565:648 603:640 617:695 625:685 630:660 655:715 662:680 725:638 787:650 793:708 805:650', '#00e600');
  c += poly('ma-w', mini('170,665 185,590 190,550 200,545 208,520 215,590 222,610 230,550 238,460 250,480 260,530 270,600 285,635 295,560 310,570 320,520 345,485 360,510 375,570 390,580 400,545 415,640 430,690 440,695 455,640 470,590 480,565 495,550 510,560 530,505 560,540 575,490 590,425 610,405 625,450 640,440 660,490 685,470 690,430 710,385 718,325 725,355 745,300 760,240 775,215 795,265 810,260 830,175'));
  c += poly('ma-y', mini('170,660 185,590 200,560 210,555 222,600 240,495 255,520 280,600 295,535 305,545 325,495 345,442 365,470 385,505 400,485 415,550 440,590 460,535 480,515 510,495 530,450 560,475 590,390 610,400 630,430 650,425 670,465 685,455 700,405 715,360 735,360 760,305 780,292 797,327 815,305 830,262'));
  /* volume bars: x from 232, y from 430, in thirds of a pixel; foot on the 599 rule */
  var base = 599;
  var first = ['g172:88','r178:340','r184:342','r187:355','g190:362','g196:370','r199:380','r205:381','g210:395','g216:393','r226:402','g229:407','r235:400','r238:407','g244:418','g250:423','g256:430','g262:435','g268:430','g274:426','g280:424','r286:430','r290:415','r296:430','g300:445','r306:453','r312:443','g318:438','r325:435','r331:437'];
  first.forEach(function (b) {
    var col = b[0] === 'g' ? '#00e600' : '#ff3232', a = b.slice(1).split(':'), x = (232 + a[0] * Z).toFixed(1), y = (430 + a[1] * Z).toFixed(1);
    c += '<line x1="' + x + '" x2="' + x + '" y1="' + base + '" y2="' + y + '" stroke="' + col + '" stroke-width="' + (a[0] === '172' ? 1 : 2) + '"/>';
  });
  'g445 g440 r448 r452 g457 g455 g455 g455 g455 r455 r450 g445 g448 g441 r448 r455 g450 g455 r460 r458 r457 g461 r458 r460 g462 r458 r455 g457 r458 r460 g460 g472 g470 g473 g475 r478 r462 r452 r460 g448 g452 r462 g463 r462 g461 r472 r475 g472 r472 g470 r472 g468 g466 r470 r472 r475 g478 g478 r420 g473 r474 r470 g470 r455 g450 r460 r462 g464 g458 r445 r434 w452 r448 g447 g460 g461 g465 g468 r458 r452 r440 r434 g505'.split(' ').forEach(function (b, i) {
    var col = b[0] === 'g' ? '#00e600' : b[0] === 'w' ? '#ffffff' : '#ff3232';
    var x = (232 + (337 + i * 6) * Z).toFixed(1), y = (430 + b.slice(1) * Z).toFixed(1);
    c += '<line x1="' + x + '" x2="' + x + '" y1="' + base + '" y2="' + y + '" stroke="' + col + '" stroke-width="1.5"/>';
  });
  document.getElementById('miniChart').innerHTML = c;

  /* ---------- tick lists ---------- */
  var ticks = [[2,'1441.07',2344],[2,'1441.04',2115],[2,'1440.70',2513],[2,'1440.75',1858],[2,'1441.04',2425],[2,'1441.05',3017],[2,'1440.75',2788],[2,'1440.87',2449],[2,'1440.93',2570],[2,'1441.17',2131],[2,'1441.25',3395],
    [3,'1441.40',2702],[3,'1441.20',3251],[3,'1441.44',2199],[3,'1441.48',2302],[3,'1441.88',3200],[3,'1441.85',2488],[3,'1442.18',2468],[3,'1441.48',2720],[3,'1441.11',2066],[3,'1441.37',2290],[3,'1441.38',2193],[3,'1441.22',3141],[3,'1440.96',2732],[3,'1441.64',2956],[3,'1441.75',3480],[3,'1441.82',1858],[3,'1441.61',2200],[3,'1441.57',3121]];
  function row(t, showVol) {
    return '<div class="tick-row"><span class="t-time">13:3' + t[0] + '</span><span class="t-price">' + t[1] + '</span>' + (showVol ? '<span class="t-vol">' + t[2] + '<i>万</i></span>' : '') + '</div>';
  }
  /* rows from the 15th on lie under the toolbox, whose right column hides the volume */
  document.getElementById('quoteTicks').innerHTML = ticks.slice(0, 27).map(function (t, i) { return row(t, i < 14); }).join('');
  document.getElementById('miniTicks').innerHTML = ticks.slice(3).map(function (t) { return row(t, true); }).join('');
})();
```
